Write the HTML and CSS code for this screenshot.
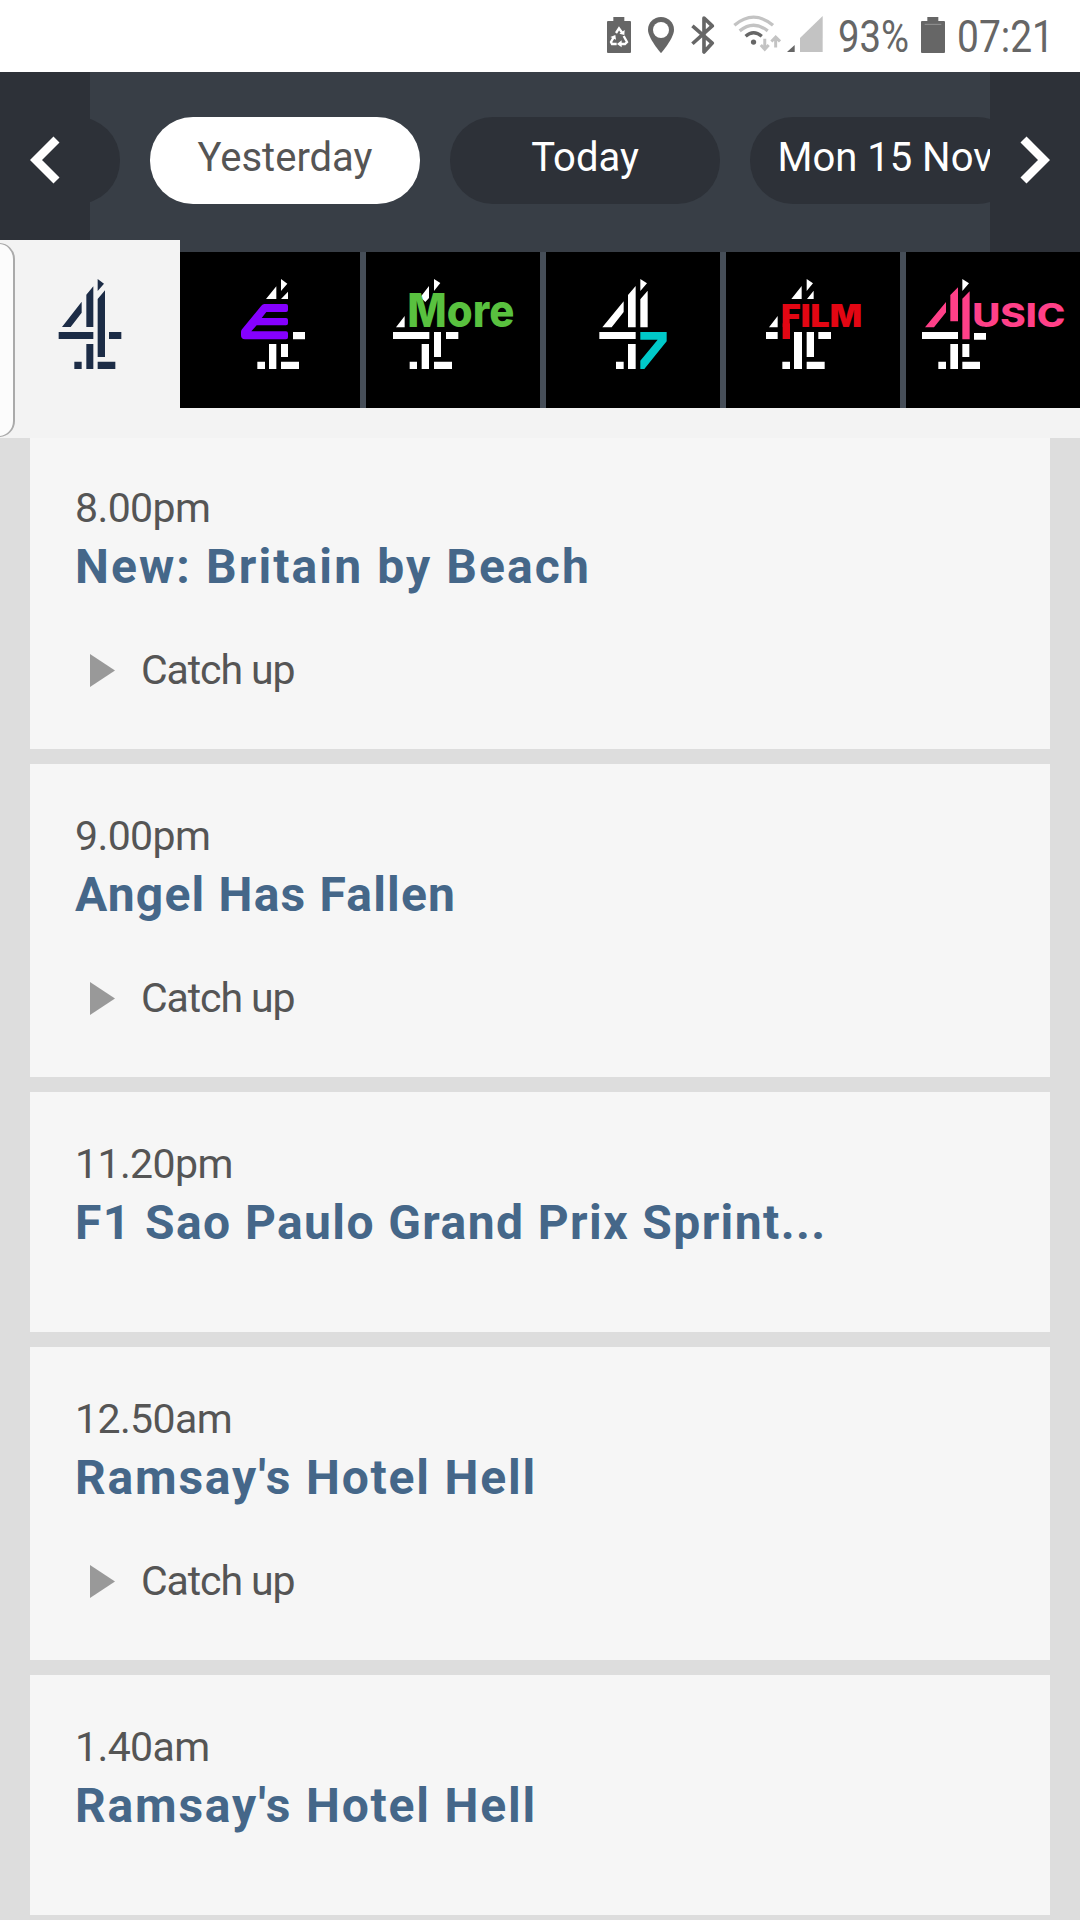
FILE: index.html
```
<!DOCTYPE html>
<html lang="en">
<head>
    <meta charset="utf-8">
    <title>TV guide</title>
    <link rel="stylesheet" href="styles.css">
</head>
<body>
    <div class="status-bar">
        <svg class="icon-saver" viewBox="51 51 72 108">
            <path d="M70 51h33v12h17q3 0 3 3v90q0 3-3 3H54q-3 0-3-3V66q0-3 3-3h16z" fill="#666"/>
            <path d="M78 99l9-14 10 14M101 108l10 18-6 6H92M80 132H66l-3-6 8-14" fill="none" stroke="#fff" stroke-width="7"/>
            <path d="M88 101l15 4 1-15zM95 121v21l-14-10zM61 111l15-6 2 14z" fill="#fff"/>
        </svg>
        <svg class="icon-pin" viewBox="174 51 78 108">
            <path d="M213 51c-22 0-39 17-39 38 0 26 39 70 39 70s39-44 39-70c0-21-17-38-39-38z" fill="#666"/>
            <circle cx="213" cy="90" r="24" fill="#fff"/>
        </svg>
        <svg class="icon-bluetooth" viewBox="302 47 72 115">
            <path d="M306 77l60 52-25 27V53l25 24-60 54" fill="none" stroke="#666" stroke-width="11" stroke-linejoin="round"/>
        </svg>
        <svg class="icon-wifi" viewBox="428 46 145 112">
            <path d="M432 77Q490 28 549 77M448 94q42-34 85 0" fill="none" stroke="#c3c3c3" stroke-width="10"/>
            <path d="M466 110q24-21 49 0" fill="none" stroke="#666" stroke-width="10"/>
            <circle cx="490" cy="128" r="8" fill="#666"/>
            <path d="M524 118v33m-12-14l12 13 12-13M557 144v-32m-13 14l13-13 13 13" fill="none" stroke="#c3c3c3" stroke-width="9"/>
        </svg>
        <svg class="icon-signal" viewBox="592 48 108 108">
            <path d="M592 156l23-21v21z" fill="#666"/>
            <path d="M631 156v-42l68-66v108z" fill="#c3c3c3"/>
        </svg>
        <svg class="status-percent" viewBox="0 0 76 56">
            <text x="2" y="44" textLength="71" lengthAdjust="spacingAndGlyphs">93%</text>
        </svg>
        <svg class="icon-battery" viewBox="993 51 72 108">
            <path d="M1012 51h33v12h17q3 0 3 3v90q0 3-3 3h-66q-3 0-3-3V66q0-3 3-3h16z" fill="#666"/>
            <path d="M1004 73h50" stroke="#aaa" stroke-width="2"/>
        </svg>
        <svg class="status-time" viewBox="0 0 102 56">
            <text x="2" y="44" textLength="97" lengthAdjust="spacingAndGlyphs">07:21</text>
        </svg>
    </div>

    <div class="date-nav">
        <button class="arrow arrow-left">
            <svg viewBox="0 0 30 48"><path d="M26.500 3.500L6 24l20.500 20.500" fill="none" stroke="#fff" stroke-width="8.500"/></svg>
        </button>
        <div class="dates">
            <span class="date date-past"></span>
            <span class="date date-active">Yesterday</span>
            <span class="date date-today">Today</span>
            <span class="date date-next">Mon 15 Nov</span>
        </div>
        <button class="arrow arrow-right">
            <svg viewBox="0 0 30 48"><path d="M3.500 3.500L24 24 3.500 44.500" fill="none" stroke="#fff" stroke-width="8.500"/></svg>
        </button>
    </div>

    <div class="channels">
        <div class="drawer"></div>
        <!-- Channel 4 -->
        <div class="channel channel-active">
            <svg viewBox="0 51 540 468" fill="#1c2c46">
                <path d="M186 276L245 200V233L212 276ZM259 276V179L280 154V276ZM293 132L312 146L293 168ZM293 192L315 166V366H293Z"/>
                <path d="M176 291h104v21H176zM327 291h37v21h-37zM259 327h21v75h-21zM223 380h22v22h-22zM293 380h53v22h-53z"/>
            </svg>
        </div>
        <!-- E4 -->
        <div class="channel">
            <svg viewBox="540 51 540 468" fill="#fff">
                <path d="M798 192L829 154V192ZM843 132L862 146L843 168ZM843 192L864 170V192Z"/>
                <path d="M879 291h36v22h-36zM807 327h22v75h-22zM843 327h21v39h-21zM772 380h23v22h-23zM843 380h54v22h-54z"/>
                <path d="M793 207H858q6 0 6 6v12q0 6-6 6H799L785 249H858q6 0 6 6v10q0 6-6 6H770L754 289H858q6 0 6 6v12q0 6-6 6H735q-12 0-12-12V291q0-4 3-8L784 212q4-5 9-5z" fill="#8500ff"/>
            </svg>
        </div>
        <!-- More4 -->
        <div class="channel divided">
            <svg viewBox="18 36 522 468" fill="#fff">
                <path d="M181 172L207 138V174L196 186ZM222 117L241 129L222 153ZM108 262L134 228V262Z"/>
                <path d="M99 276h109v21H99zM222 276h21v75h-21zM258 276h37v21h-37zM185 312h22v75h-22zM149 365h22v22h-22zM222 365h54v22h-54z"/>
                <text class="logo-more" x="142" y="262" textLength="321" lengthAdjust="spacingAndGlyphs">More</text>
            </svg>
        </div>
        <!-- 4seven -->
        <div class="channel divided">
            <svg viewBox="558 36 522 468" fill="#fff">
                <path d="M727 262L791 184V216L755 262ZM804 262V165L827 138V262ZM841 117L861 130L841 153ZM841 262V178L863 152V262Z"/>
                <path d="M718 276h109v21H718zM804 312h23v75h-23zM768 365h23v22h-23z"/>
                <path d="M841 276H920V304L853 387H841V362L893 299H841Z" fill="#00c9c9"/>
            </svg>
        </div>
        <!-- Film4 -->
        <div class="channel divided">
            <svg viewBox="18 36 522 468" fill="#fff">
                <path d="M214 177L245 138V177ZM260 117L279 130L260 153ZM261 177L281 152V177ZM147 262L173 228V262Z"/>
                <path d="M138 276h35v21h-35zM222 276h24v111h-24zM260 276h22v75h-22zM295 276h38v21h-38zM187 365h23v22h-23zM260 365h54v22h-54z"/>
                <text class="logo-film" x="183" y="262" textLength="243" lengthAdjust="spacingAndGlyphs">FILM</text>
                <path d="M188 250h22v47h-22z" fill="#e30613"/>
            </svg>
        </div>
        <!-- 4Music -->
        <div class="channel divided">
            <svg viewBox="558 36 522 468" fill="#fff">
                <path d="M727 117L747 130L727 153ZM606 276h108v21H606zM762 279h36v20h-36zM691 312h23v75h-23zM727 312h21v39h-21zM655 365h23v22h-23zM727 365h53v22h-53z"/>
                <path d="M615 262L678 186V217L642 262ZM691 244V165L714 142V244ZM727 298V176L749 154V298Z" fill="#ff4088"/>
                <text class="logo-music" x="757" y="262" textLength="279" lengthAdjust="spacingAndGlyphs">USIC</text>
            </svg>
        </div>
    </div>

    <div class="listings">
        <div class="programme">
            <div class="time">8.00pm</div>
            <div class="title title-britain">New: Britain by Beach</div>
            <div class="catch-up"><svg viewBox="0 0 25 33"><path d="M0 0l25 16.500L0 33z"/></svg>Catch up</div>
        </div>
        <div class="programme">
            <div class="time">9.00pm</div>
            <div class="title title-angel">Angel Has Fallen</div>
            <div class="catch-up"><svg viewBox="0 0 25 33"><path d="M0 0l25 16.500L0 33z"/></svg>Catch up</div>
        </div>
        <div class="programme short">
            <div class="time">11.20pm</div>
            <div class="title title-f1">F1 Sao Paulo Grand Prix Sprint...</div>
        </div>
        <div class="programme">
            <div class="time">12.50am</div>
            <div class="title">Ramsay's Hotel Hell</div>
            <div class="catch-up"><svg viewBox="0 0 25 33"><path d="M0 0l25 16.500L0 33z"/></svg>Catch up</div>
        </div>
        <div class="programme short">
            <div class="time">1.40am</div>
            <div class="title">Ramsay's Hotel Hell</div>
        </div>
    </div>
</body>
</html>
```

FILE: styles.css
```
* {
    box-sizing: border-box;
}

body {
    margin: 0;
    height: 1920px;
    overflow: hidden;
    background: #ddd;
    color: #555;
    font-family: Roboto, "Liberation Sans", sans-serif;
    display: flex;
    flex-direction: column;
}

svg {
    display: block;
    flex: none;
}

/* Phone status bar */
.status-bar {
    height: 72px;
    flex: none;
    display: flex;
    justify-content: flex-end;
    align-items: flex-start;
    padding: 16px 23px 0 0;
    background: #fff;
}

.status-bar text {
    font-size: 45px;
    fill: #666;
}

.icon-saver, .icon-battery {
    width: 24px;
    height: 36px;
    margin-top: 1px;
}

.icon-pin {
    width: 26px;
    height: 36px;
    margin: 1px 0 0 17px;
}

.icon-bluetooth {
    width: 24px;
    height: 38px;
    margin-left: 17px;
}

.icon-wifi {
    width: 48px;
    height: 37px;
    margin: -1px 0 0 18px;
}

.icon-signal {
    width: 36px;
    height: 36px;
    margin-left: 6px;
}

.status-percent {
    width: 76px;
    height: 56px;
    margin: -8px 9px 0 13px;
}

.status-time {
    width: 102px;
    height: 56px;
    margin: -8px 0 0 10px;
}

/* Date picker */
.date-nav {
    height: 180px;
    flex: none;
    display: flex;
    background: #383e46;
}

.arrow {
    width: 90px;
    height: 180px;
    flex: none;
    display: flex;
    justify-content: center;
    padding: 64px 0 0;
    border: 0;
    background: #2d3138;
}

.arrow svg {
    width: 30px;
    height: 48px;
}

.dates {
    flex: 1;
    display: flex;
    gap: 30px;
    padding-top: 45px;
    overflow: hidden;
}

.date {
    width: 270px;
    height: 87px;
    flex: none;
    border-radius: 43px;
    background: #2d3138;
    color: #fff;
    font-size: 40px;
    line-height: 81px;
    text-align: center;
    white-space: nowrap;
}

.date-past {
    margin-left: -240px;
}

.date-active {
    background: #fff;
    color: #555;
}

/* Channel tabs */
.channels {
    position: relative;
    height: 186px;
    flex: none;
    display: flex;
    padding-bottom: 30px;
    background: #f3f3f3;
}

.channel {
    width: 180px;
    height: 156px;
    background: #000;
}

.channel svg {
    width: 100%;
    height: 156px;
}

.channel-active {
    height: 168px;
    margin-top: -12px;
    padding-top: 12px;
    background: #f3f3f3;
}

.divided {
    border-left: 6px solid #464e58;
}

/* edge of the side drawer, over the first tab */
.drawer {
    position: absolute;
    left: -30px;
    top: -9px;
    width: 45px;
    height: 194px;
    border: 1px solid #aaa;
    border-right-width: 2px;
    border-radius: 16px;
    background: #fcfcfc;
}

.logo-more {
    font: 800 138px Inter, sans-serif;
    fill: #59c13f;
}

.logo-film {
    font: 900 96px Inter, sans-serif;
    fill: #e30613;
}

.logo-music {
    font: 800 96px Inter, sans-serif;
    fill: #ff4088;
}

/* Programme list */
.listings {
    flex: 1;
    overflow: hidden;
    padding: 0 30px;
}

.programme {
    height: 313px;
    margin-bottom: 15px;
    padding: 47px 45px 0;
    background: #f6f6f6;
}

.programme:first-child {
    margin-top: -2px;
}

.short {
    height: 240px;
}

.time {
    font-size: 41px;
    letter-spacing: -0.6px;
    line-height: 50px;
}

.title {
    color: #456789;
    font-size: 48px;
    font-weight: 700;
    letter-spacing: 1.8px;
    line-height: 67px;
    white-space: nowrap;
}

.title-britain {
    letter-spacing: 2.100px;
}

.title-angel {
    letter-spacing: 1.200px;
}

.title-f1 {
    letter-spacing: 1.400px;
}

.catch-up {
    display: flex;
    align-items: center;
    margin-top: 45px;
    padding-left: 15px;
    font-size: 41px;
    letter-spacing: -1.100px;
    line-height: 50px;
}

.catch-up svg {
    width: 25px;
    height: 33px;
    margin-right: 26px;
    fill: #999;
}
```
